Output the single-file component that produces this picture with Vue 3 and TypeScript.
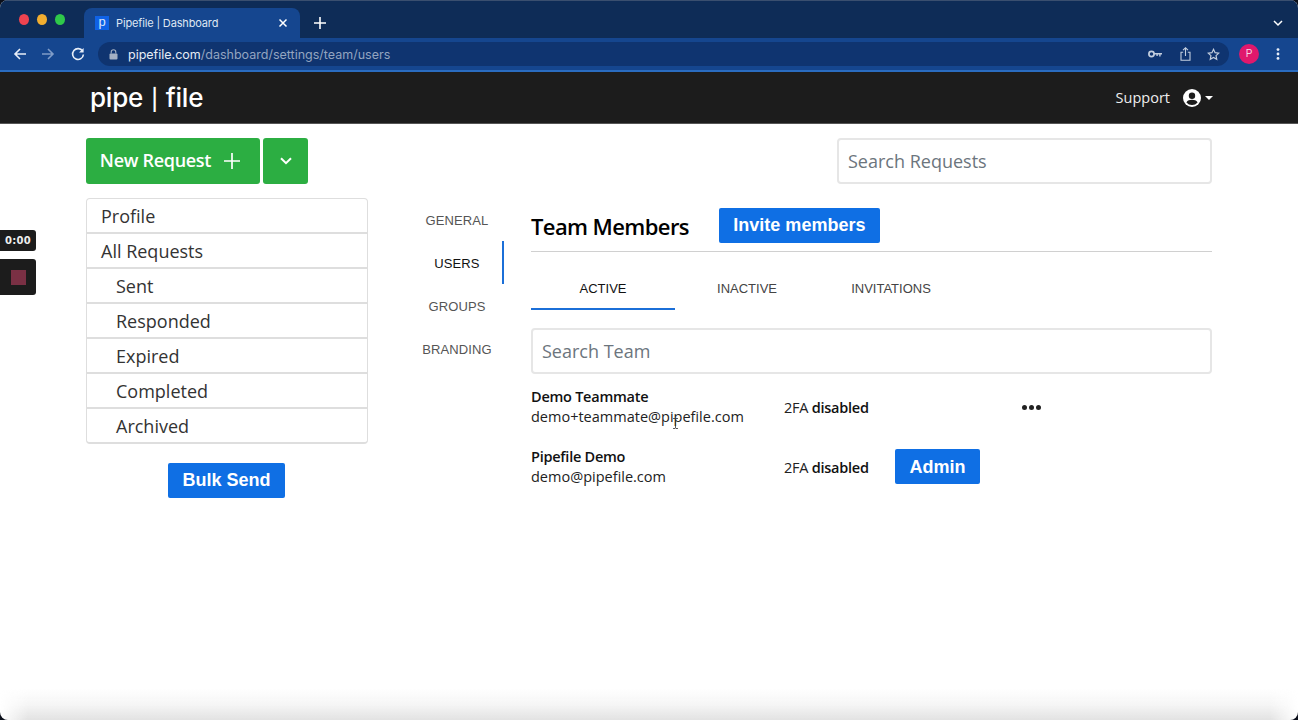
<script setup lang="ts">
const sideItems = [
  { label: 'Profile', sub: false },
  { label: 'All Requests', sub: false },
  { label: 'Sent', sub: true },
  { label: 'Responded', sub: true },
  { label: 'Expired', sub: true },
  { label: 'Completed', sub: true },
  { label: 'Archived', sub: true },
]
const settingsNav = ['GENERAL', 'USERS', 'GROUPS', 'BRANDING']
const tabs = ['ACTIVE', 'INACTIVE', 'INVITATIONS']
</script>

<template>
  <div class="page">
    <header class="chrome">
      <div class="tabstrip">
        <div class="lights"><i class="red"></i><i class="amber"></i><i class="green"></i></div>
        <div class="tab">
          <span class="favicon">p</span>
          <span class="tabtitle">Pipefile | Dashboard</span>
          <svg class="tabx" width="10" height="10" viewBox="0 0 10 10"><path d="M1.5 1.5l7 7M8.5 1.5l-7 7" stroke="#fff" stroke-width="1.5"/></svg>
        </div>
        <svg class="newtab" width="12" height="12" viewBox="0 0 12 12"><path d="M6 0v12M0 6h12" stroke="#fff" stroke-width="1.6"/></svg>
        <svg class="tabchev" width="10" height="7" viewBox="0 0 10 7"><path d="M1 1l4 4 4-4" fill="none" stroke="#fff" stroke-width="1.5"/></svg>
      </div>
      <div class="toolbar">
        <svg class="tool" width="14" height="14" viewBox="0 0 14 14"><path d="M13 7H2M7 2L2 7l5 5" fill="none" stroke="#e8eef8" stroke-width="1.6"/></svg>
        <svg class="tool dim" width="14" height="14" viewBox="0 0 14 14"><path d="M1 7h11M7 2l5 5-5 5" fill="none" stroke="#7f9cc8" stroke-width="1.6"/></svg>
        <svg class="tool reload" width="14" height="14" viewBox="0 0 14 14"><path d="M11.6 4.2A5.4 5.4 0 1 0 12.4 7.5" fill="none" stroke="#e8eef8" stroke-width="1.6"/><path d="M12.6 1v4.6H8z" fill="#e8eef8"/></svg>
        <div class="omnibox">
          <svg width="9" height="11" viewBox="0 0 9 11"><rect x="0.5" y="4.5" width="8" height="6" rx="1" fill="#a5b1c4"/><path d="M2.2 4.5V3a2.3 2.3 0 0 1 4.6 0v1.5" fill="none" stroke="#a5b1c4" stroke-width="1.1"/></svg>
          <span class="url"><b>pipefile.com</b>/dashboard/settings/team/users</span>
          <span class="spacer"></span>
          <svg class="key" width="14" height="8" viewBox="0 0 14 8"><circle cx="3.5" cy="4" r="2.6" fill="none" stroke="#c3cede" stroke-width="1.7"/><path d="M6 3h8v1.6h-1.4V6.5h-1.4V4.6H9.8V6H8.4V4.6H6z" fill="#c3cede"/></svg>
          <svg class="share" width="11" height="14" viewBox="0 0 11 14"><path d="M3.2 5.2H1v8h9v-8H7.8M5.5 9V1M3 3.2L5.5 .8 8 3.2" fill="none" stroke="#c3cede" stroke-width="1.1"/></svg>
          <svg class="star" width="13" height="13" viewBox="0 0 24 24"><path d="M12 2.5l2.9 6.2 6.8.8-5 4.6 1.3 6.7-6-3.4-6 3.4 1.3-6.7-5-4.6 6.8-.8z" fill="none" stroke="#c3cede" stroke-width="2.2"/></svg>
        </div>
        <span class="avatar">P</span>
        <svg class="kebab" width="4" height="12" viewBox="0 0 4 12"><circle cx="2" cy="1.6" r="1.4" fill="#e8eef8"/><circle cx="2" cy="6" r="1.4" fill="#e8eef8"/><circle cx="2" cy="10.4" r="1.4" fill="#e8eef8"/></svg>
      </div>
    </header>

    <nav class="appbar">
      <span class="logo">pipe <span class="logobar">|</span> file</span>
      <div class="appbar-right">
        <span class="support">Support</span>
        <svg width="18" height="18" viewBox="0 0 18 18"><circle cx="9" cy="9" r="9" fill="#fff"/><circle cx="9" cy="6.8" r="3.2" fill="#1c1c1c"/><path d="M3.4 13.4C4.6 11.4 6.6 10.8 9 10.8s4.4.6 5.6 2.6A7.2 7.2 0 0 1 9 16a7.2 7.2 0 0 1-5.6-2.6z" fill="#1c1c1c"/></svg>
        <i class="caret"></i>
      </div>
    </nav>

    <main class="content">
      <div class="toprow">
        <div class="actions">
          <button class="green-btn new"><span>New Request</span>
            <svg width="16" height="16" viewBox="0 0 16 16"><path d="M8 0v16M0 8h16" stroke="#fff" stroke-width="1.7"/></svg>
          </button>
          <button class="green-btn more">
            <svg width="12" height="8" viewBox="0 0 12 8"><path d="M1 1.2l5 5 5-5" fill="none" stroke="#fff" stroke-width="2"/></svg>
          </button>
        </div>
        <input class="search requests" placeholder="Search Requests" />
      </div>

      <div class="columns">
        <aside class="sidebar">
          <ul class="sidelist">
            <li v-for="item in sideItems" :key="item.label" :class="{ sub: item.sub }">{{ item.label }}</li>
          </ul>
          <button class="blue-btn bulk">Bulk Send</button>
        </aside>

        <div class="settings">
          <a v-for="n in settingsNav" :key="n" :class="{ active: n === 'USERS' }">{{ n }}</a>
        </div>

        <section class="team">
          <div class="teamhead">
            <h1>Team Members</h1>
            <button class="blue-btn invite">Invite members</button>
          </div>
          <div class="tabs">
            <a v-for="t in tabs" :key="t" :class="{ active: t === 'ACTIVE' }">{{ t }}</a>
          </div>
          <input class="search teamsearch" placeholder="Search Team" />

          <div class="member first">
            <div class="who"><strong>Demo Teammate</strong><span>demo+teammate@pipefile.com</span></div>
            <div class="fa">2FA <b>disabled</b></div>
            <div class="role"></div>
            <div class="dots"><i></i><i></i><i></i></div>
          </div>
          <div class="member">
            <div class="who"><strong>Pipefile Demo</strong><span>demo@pipefile.com</span></div>
            <div class="fa">2FA <b>disabled</b></div>
            <div class="role"><button class="blue-btn admin">Admin</button></div>
          </div>
        </section>
      </div>
    </main>

    <div class="recorder">
      <div class="timer">0:00</div>
      <div class="stop"><i></i></div>
    </div>
    <svg class="ibeam" width="7" height="11" viewBox="0 0 7 11"><path d="M1 .5h2l.5.5.5-.5h2M3.5 1v9M1 10.5h2l.5-.5.5.5h2" fill="none" stroke="#333" stroke-width=".8"/></svg>
    <div class="bottomfade"></div>
  </div>
</template>

<style>
html, body { margin: 0; background: #0b0f1a; overflow: hidden; }
</style>

<style scoped>
.page {
  position: relative;
  width: 1298px;
  height: 720px;
  overflow: hidden;
  background: #fff;
  border-radius: 8px;
  font-family: "Open Sans", "Noto Sans", sans-serif;
  color: #212529;
}
.chrome { height: 72px; background: #0e2c57; border-top: 1px solid #3a4f6f; box-sizing: border-box; }
.tabstrip { height: 37px; display: flex; align-items: flex-end; position: relative; }
.lights { display: flex; gap: 8px; padding: 13px 0 0 19px; width: 65px; box-sizing: border-box; align-self: flex-start; }
.lights i { width: 11px; height: 11px; border-radius: 50%; }
.red { background: #ee4350; }
.amber { background: #f2ae30; }
.green { background: #2fc94a; }
.tab { width: 216px; height: 30px; margin-left: 19px; background: #15468f; border-radius: 8px 8px 0 0; display: flex; align-items: center; box-sizing: border-box; padding: 0 10px 0 11px; }
.favicon { width: 14px; height: 14px; background: #0f62e6; color: #dbe7fb; font: 13px/12px "Liberation Sans", sans-serif; text-align: center; }
.tabtitle { margin-left: 7px; font: 11px "Inter", "Liberation Sans", sans-serif; letter-spacing: -.15px; color: #dfe7f3; flex: 1; }
.tabx { margin-right: 2px; }
.newtab { margin: 0 0 9px 14px; }
.tabchev { position: absolute; right: 15px; top: 19px; }
.toolbar { height: 34px; background: #15468f; border-bottom: 2px solid #2a6cc0; box-sizing: border-box; display: flex; align-items: center; padding-left: 13px; position: relative; }
.tool { margin-right: 14px; }
.tool.reload { margin-left: 2px; }
.omnibox { width: 1131px; height: 24px; border-radius: 12px; background: #0f3470; display: flex; align-items: center; padding: 0 9px 0 11px; box-sizing: border-box; margin-left: -1px; }
.omnibox .url { margin-left: 10px; font: 12.5px "Inter", "Liberation Sans", sans-serif; color: #93a5c0; }
.url b { font-weight: 400; color: #e6ecf5; }
.spacer { flex: 1; }
.share { margin-left: 18px; }
.star { margin-left: 16px; }
.avatar { width: 20px; height: 20px; border-radius: 50%; background: #e0186c; color: #f5d6e5; font: 10px/20px "Liberation Sans", sans-serif; text-align: center; margin-left: 10px; }
.kebab { margin-left: 17px; }

.appbar { height: 52px; background: #1c1c1c; border-bottom: 1px solid #555; box-sizing: border-box; display: flex; align-items: center; justify-content: space-between; padding: 0 85px 0 90px; }
.logo { font: 500 26px "Inter", "Lato", sans-serif; color: #fff; letter-spacing: -.2px; }
.logobar { font-size: 21px; padding: 0 1px; }
.appbar-right { display: flex; align-items: center; color: #eee; }
.support { font-size: 14.5px; margin-right: 13px; }
.caret { margin-left: 4px; border: 4px solid transparent; border-top-color: #fff; border-bottom: 0; }

.content { padding: 14px 86px 0; }
.toprow { display: flex; justify-content: space-between; align-items: flex-start; }
.actions { display: flex; gap: 3px; }
button { border: 0; cursor: pointer; }
.green-btn { height: 46px; background: #2cae42; color: #fff; border-radius: 3px; display: flex; align-items: center; justify-content: center; font: 600 18px "Open Sans", sans-serif; }
.new { width: 174px; gap: 13px; letter-spacing: -.3px; padding: 0 6px 0 0; }
.new span { margin-bottom: 2px; }
.more { width: 45px; padding: 0; }
.search { box-sizing: border-box; height: 46px; border: 2px solid #e6e6e6; border-radius: 4px; padding: 0 9px; font: 18px "Open Sans", sans-serif; color: #333; outline: 0; background: #fff; }
.search::placeholder { color: #6c757d; opacity: 1; }
.requests { width: 375px; }

.columns { display: flex; align-items: flex-start; margin-top: 14px; }
.sidebar { width: 282px; display: flex; flex-direction: column; align-items: center; }
.sidelist { list-style: none; margin: 0; padding: 0; width: 100%; box-sizing: border-box; border: 1px solid #dedede; border-bottom-width: 2px; border-radius: 4px; }
.sidelist li { height: 35px; line-height: 34px; padding-left: 14px; font-size: 18px; color: #333; box-sizing: border-box; border-top: 2px solid #dedede; }
.sidelist li:first-child { border-top: 0; height: 33px; line-height: 35px; }
.sidelist li.sub { padding-left: 29px; }
.blue-btn { display: block; background: #0f6fe4; color: #fff; font: 700 18px "Liberation Sans", Arial, sans-serif; border-radius: 2px; height: 35px; padding: 0; }
.bulk { width: 117px; margin: 19px 1px 0 0; }

.settings { width: 92px; margin: 0 27px 0 44px; display: flex; flex-direction: column; align-items: stretch; }
.settings a { height: 43px; text-align: center; font: 13px/45px "Liberation Sans", sans-serif; color: #555; letter-spacing: .1px; box-sizing: border-box; border-right: 2px solid transparent; }
.settings a.active { color: #111; border-right-color: #1b6fd8; }

.team { width: 681px; }
.teamhead { display: flex; align-items: center; height: 44px; border-bottom: 1px solid #d0d0d0; box-sizing: border-box; padding-bottom: 8px; gap: 30px; margin-top: 10px; }
h1 { margin: 0; font: 600 22px "Open Sans", sans-serif; color: #000; letter-spacing: -.6px; }
.invite { width: 161px; }
.tabs { display: flex; margin-top: 14px; height: 44px; }
.tabs a { width: 144px; font: 13px/46px "Liberation Sans", sans-serif; text-align: center; color: #444; box-sizing: border-box; }
.tabs a.active { color: #111; border-bottom: 2px solid #1b6fd8; }
.teamsearch { width: 100%; margin-top: 18px; display: block; }
.member { display: flex; align-items: center; height: 60px; font-size: 14.5px; color: #222; }
.member.first { margin-top: 3px; }
.who { width: 253px; display: flex; flex-direction: column; line-height: 20px; }
.who strong { font-weight: 600; color: #111; letter-spacing: -.25px; }
.fa { width: 111px; letter-spacing: -.25px; }
.fa b { font-weight: 600; color: #111; }
.role { width: 127px; }
.admin { width: 85px; margin-bottom: 2px; padding-top: 2px; }
.dots { display: flex; gap: 2px; }
.dots i { width: 5px; height: 5px; border-radius: 50%; background: #222; }

.recorder { position: absolute; left: 0; top: 230px; display: flex; flex-direction: column; gap: 8px; }
.timer { width: 36px; height: 21px; background: #1c1c1c; border-radius: 0 3px 3px 0; color: #eee; font: 700 10px/21px "DejaVu Sans", sans-serif; letter-spacing: .3px; text-align: center; box-sizing: border-box; }
.stop { width: 36px; height: 36px; background: #1c1c1c; border-radius: 0 3px 3px 0; display: flex; align-items: center; justify-content: center; }
.stop i { width: 15px; height: 15px; background: #7a3044; }
.ibeam { position: absolute; left: 672px; top: 418px; }
.bottomfade { position: absolute; left: 0; right: 0; bottom: 0; height: 32px; background: linear-gradient(to bottom, rgba(225,225,225,0), rgba(225,225,225,.3) 50%, rgba(225,225,225,.95)); -webkit-mask-image: linear-gradient(to right, transparent 0, #000 28px, #000 calc(100% - 28px), transparent 100%); mask-image: linear-gradient(to right, transparent 0, #000 28px, #000 calc(100% - 28px), transparent 100%); }
</style>
